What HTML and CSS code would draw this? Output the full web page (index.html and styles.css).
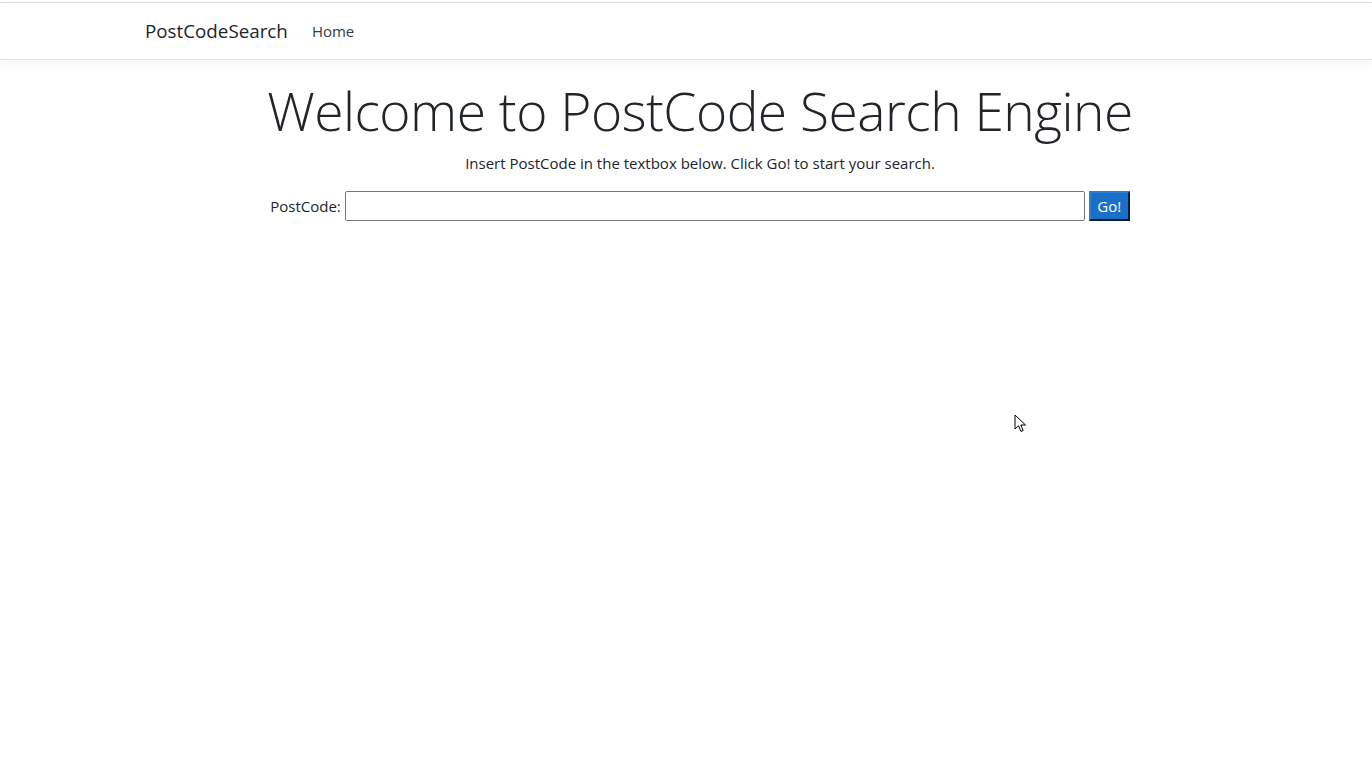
FILE: index.html
```html
<!DOCTYPE html>
<html lang="en">
<head>
<meta charset="utf-8">
<title>PostCodeSearch</title>
<link rel="stylesheet" href="styles.css">
</head>
<body>
<header class="topbar">
  <nav class="navbar">
    <div class="container nav-inner">
      <a class="brand" href="#">PostCodeSearch</a>
      <a class="nav-link" href="#">Home</a>
    </div>
  </nav>
</header>
<main class="container main">
  <h1 class="display">Welcome to PostCode Search Engine</h1>
  <p class="lead-text">Insert PostCode in the textbox below. Click Go! to start your search.</p>
  <form class="search-form">
    <label class="label" for="pc">PostCode:</label>
    <input class="input" id="pc" type="text">
    <button class="btn" type="button">Go!</button>
  </form>
</main>
<svg class="cursor" width="14" height="20" viewBox="0 0 14 20"><path d="M1 1 L1 15 L4.5 11.8 L7 17.5 L9.2 16.5 L6.8 11 L11.5 11 Z" fill="#fff" stroke="#000" stroke-width="1" stroke-linejoin="miter"/></svg>
</body>
</html>
```
FILE: styles.css
```css
html, body {
  margin: 0;
  padding: 0;
  background: #fff;
}
body {
  font-family: "Open Sans", "Noto Sans", sans-serif;
  color: #212529;
  font-size: 15px;
}
.topbar {
  padding-top: 2px;
}
.navbar {
  border-top: 1px solid #dcdcdc;
  border-bottom: 1px solid #dee2e6;
  box-shadow: 0 4px 8px rgba(0,0,0,0.04);
  height: 56px;
  display: flex;
  align-items: center;
}
.container {
  width: 1110px;
  margin-left: 145px;
}
.nav-inner {
  display: flex;
  align-items: center;
}
.brand {
  font-size: 18.8px;
  color: #212529;
  text-decoration: none;
  margin-right: 24px;
}
.nav-link {
  font-size: 15px;
  color: #343a40;
  text-decoration: none;
}
.main {
  display: flex;
  flex-direction: column;
  align-items: center;
  padding-top: 19px;
}
.display {
  font-weight: 300;
  font-size: 53.3px;
  line-height: 1.2;
  margin: 0;
  color: #212529;
  letter-spacing: -0.5px;
}
.lead-text {
  margin: 10px 0 0;
  font-size: 15px;
}
.search-form {
  display: flex;
  align-items: center;
  margin-top: 18px;
}
.label {
  font-size: 15px;
  margin-right: 4px;
}
.input {
  width: 740px;
  height: 30px;
  box-sizing: border-box;
  border: 1px solid #767676;
  border-radius: 2px;
  padding: 0 4px;
  margin: 0;
}
.btn {
  margin-left: 4px;
  height: 30px;
  width: 41px;
  box-sizing: border-box;
  background: #1a6fc6;
  color: #fff;
  font-family: "Open Sans", sans-serif;
  font-size: 15px;
  border: 2px outset #0d4a8a;
  border-top-color: #2b7fd4;
  border-left-color: #2b7fd4;
  padding: 0;
}
.cursor {
  position: absolute;
  left: 1014px;
  top: 414px;
}
```
